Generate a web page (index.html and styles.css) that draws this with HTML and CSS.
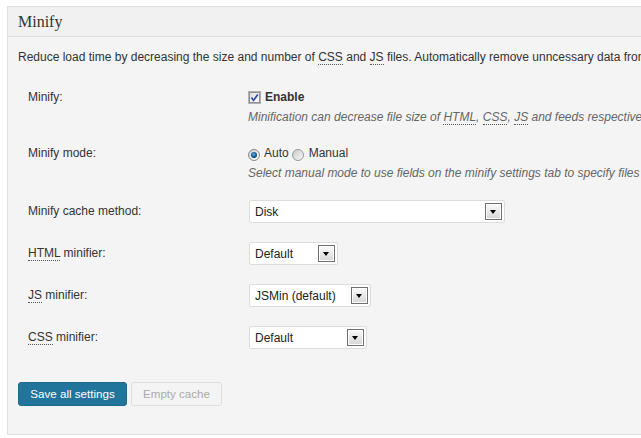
FILE: index.html
```html
<!DOCTYPE html>
<html lang="en">
<head>
    <meta charset="UTF-8">
    <title>Minify</title>
    <link rel="stylesheet" href="styles.css">
</head>
<body>
    <div class="postbox">
        <h3 class="hndle">Minify</h3>
        <div class="inside">
            <p class="intro">Reduce load time by decreasing the size and number of <abbr>CSS</abbr> and <abbr>JS</abbr> files. Automatically remove unncessary data from</p>

            <table class="form-table">
                <tr>
                    <th>Minify:</th>
                    <td>
                        <div class="line">
                            <span class="checkbox">
                                <svg width="13" height="13" viewBox="0 0 13 13">
                                    <defs>
                                        <linearGradient id="cb" x1="0" y1="0" x2="1" y2="1">
                                            <stop offset="0" stop-color="#dcdcdc"/>
                                            <stop offset="1" stop-color="#ffffff"/>
                                        </linearGradient>
                                    </defs>
                                    <rect x="0.5" y="0.5" width="12" height="12" fill="none" stroke="#6e6e6e" stroke-dasharray="1 1"/>
                                    <rect x="1.5" y="1.5" width="10" height="10" fill="url(#cb)" stroke="#8f8f8f"/>
                                    <path d="M3.4 6.4 L5.6 9.4 L9.8 3.4" fill="none" stroke="#2d4ea0" stroke-width="1.7"/>
                                </svg>
                            </span>
                            <b class="check-label">Enable</b>
                        </div>
                        <div class="desc">Minification can decrease file size of <abbr>HTML</abbr>, <abbr>CSS</abbr>, <abbr>JS</abbr> and feeds respective</div>
                    </td>
                </tr>
                <tr>
                    <th>Minify mode:</th>
                    <td>
                        <div class="line">
                            <span class="radio">
                                <svg width="12" height="12" viewBox="0 0 12 12">
                                    <defs>
                                        <radialGradient id="rb" cx="0.45" cy="0.4" r="0.6">
                                            <stop offset="0" stop-color="#5fb3e6"/>
                                            <stop offset="0.6" stop-color="#17689f"/>
                                            <stop offset="1" stop-color="#0b3f66"/>
                                        </radialGradient>
                                        <linearGradient id="rg" x1="0" y1="0" x2="1" y2="1">
                                            <stop offset="0" stop-color="#d0d0d0"/>
                                            <stop offset="1" stop-color="#ffffff"/>
                                        </linearGradient>
                                    </defs>
                                    <circle cx="6" cy="6" r="5.5" fill="url(#rg)" stroke="#888"/>
                                    <circle cx="6" cy="6" r="3" fill="url(#rb)"/>
                                </svg>
                            </span>
                            <span class="radio-label">Auto</span>
                            <span class="radio radio-next">
                                <svg width="12" height="12" viewBox="0 0 12 12">
                                    <defs>
                                        <linearGradient id="rg2" x1="0" y1="0" x2="1" y2="1">
                                            <stop offset="0" stop-color="#c8c8c8"/>
                                            <stop offset="1" stop-color="#fafafa"/>
                                        </linearGradient>
                                    </defs>
                                    <circle cx="6" cy="6" r="5.5" fill="url(#rg2)" stroke="#999"/>
                                </svg>
                            </span>
                            <span class="radio-label">Manual</span>
                        </div>
                        <div class="desc">Select manual mode to use fields on the minify settings tab to specify files</div>
                    </td>
                </tr>
                <tr class="select-row">
                    <th>Minify cache method:</th>
                    <td>
                        <div class="select select-wide">Disk<span class="select-arrow"></span></div>
                    </td>
                </tr>
                <tr class="select-row">
                    <th><abbr>HTML</abbr> minifier:</th>
                    <td>
                        <div class="select select-html">Default<span class="select-arrow"></span></div>
                    </td>
                </tr>
                <tr class="select-row">
                    <th><abbr>JS</abbr> minifier:</th>
                    <td>
                        <div class="select select-js">JSMin (default)<span class="select-arrow"></span></div>
                    </td>
                </tr>
                <tr class="select-row">
                    <th><abbr>CSS</abbr> minifier:</th>
                    <td>
                        <div class="select select-css">Default<span class="select-arrow"></span></div>
                    </td>
                </tr>
            </table>

            <div class="actions">
                <button class="button-primary">Save all settings</button>
                <button class="button" disabled>Empty cache</button>
            </div>
        </div>
    </div>
</body>
</html>
```

FILE: styles.css
```css
* {
    box-sizing: border-box;
}

html,
body {
    margin: 0;
    padding: 0;
    background-color: #fff;
    overflow: hidden;
}

body {
    font-family: 'Liberation Sans', Arial, sans-serif;
    font-size: 12px;
    line-height: 17px;
    color: #333;
}

.postbox {
    margin: 6px -40px 0 7px;
    border: 1px solid #dfdfdf;
    background-color: #f4f4f4;
}

.hndle {
    margin: 0;
    height: 30px;
    padding-left: 10px;
    border-bottom: 1px solid #dcdcdc;
    background-color: #f1f1f1;
    font-family: 'Liberation Serif', 'Times New Roman', serif;
    font-size: 16px;
    font-weight: normal;
    line-height: 29px;
    color: #333;
    white-space: nowrap;
}

.inside {
    padding: 11px 10px 28px;
}

.intro {
    margin: 0 0 13px;
    padding-top: 1px;
    white-space: nowrap;
}

abbr {
    text-decoration: none;
    border-bottom: 1px dotted #555;
}

.form-table {
    width: 900px;
    table-layout: fixed;
    border-collapse: collapse;
}

.form-table th {
    width: 220px;
    padding: 10px 10px 9px;
    text-align: left;
    font-weight: normal;
    vertical-align: top;
    white-space: nowrap;
    color: #333;
}

.form-table td {
    padding: 10px 10px 9px;
    vertical-align: top;
    white-space: nowrap;
}

.select-row th {
    padding-top: 12px;
}

.select-row td {
    padding-top: 9px;
    padding-bottom: 10px;
}

.line {
    display: flex;
    align-items: flex-start;
    height: 17px;
}

.checkbox,
.radio {
    display: block;
    line-height: 0;
}

.checkbox {
    margin-top: 2px;
}

.check-label {
    margin-left: 4px;
    color: #333;
}

.radio {
    margin-top: 4px;
}

.radio-label {
    margin-left: 4px;
}

.radio-next {
    margin-left: 3px;
}

.radio-next + .radio-label {
    margin-left: 5px;
}

.desc {
    margin-top: 3px;
    font-style: italic;
    color: #666;
}

.select {
    position: relative;
    margin-left: 1px;
    height: 23px;
    padding: 1px 0 0 5px;
    border: 1px solid #dcdcdc;
    border-radius: 2px;
    background-color: #fff;
    line-height: 20px;
    color: #222;
}

.select-wide {
    width: 256px;
}

.select-html {
    width: 89px;
}

.select-js {
    width: 122px;
}

.select-css {
    width: 118px;
}

.select-arrow {
    position: absolute;
    top: 2px;
    right: 2px;
    width: 17px;
    height: 17px;
    border: 1px solid #6f6f6f;
    box-shadow: inset 0 0 0 1px #fff;
    background: linear-gradient(#fbfbfb, #d6d6d6);
}

.select-arrow::after {
    content: '';
    position: absolute;
    left: 4px;
    top: 6px;
    border-left: 3.5px solid transparent;
    border-right: 3.5px solid transparent;
    border-top: 4px solid #000;
}

.actions {
    display: flex;
    gap: 4px;
    margin-top: 23px;
}

.button-primary,
.button {
    height: 24px;
    padding: 0;
    border-radius: 3px;
    font-family: 'Liberation Sans', Arial, sans-serif;
    font-size: 11.6px;
    line-height: 22px;
    white-space: nowrap;
    text-align: center;
}

.button-primary {
    width: 109px;
    border: 1px solid #1f6a8e;
    background-color: #21759b;
    color: #fff;
}

.button {
    width: 91px;
    border: 1px solid #dedede;
    background-color: #f4f4f4;
    color: #aaa;
}
```
